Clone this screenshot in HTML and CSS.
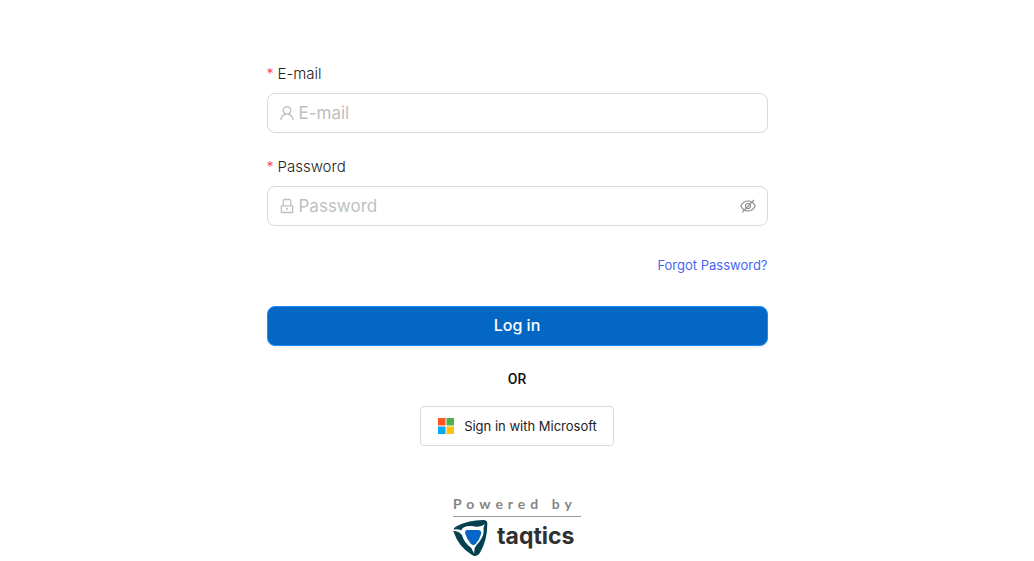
FILE: index.html
```html
<!DOCTYPE html>
<html lang="en">
<head>
<meta charset="utf-8">
<meta name="viewport" content="width=device-width, initial-scale=1">
<title>Log in</title>
<link rel="stylesheet" href="styles.css">
</head>
<body>
<main class="page">
  <form class="login">
    <div class="field">
      <label class="label" for="email"><span class="required">*</span>E-mail</label>
      <div class="control">
        <svg class="prefix" viewBox="64 64 896 896" aria-hidden="true"><path d="M858.5 763.6a374 374 0 00-80.6-119.5 375.63 375.63 0 00-119.5-80.6c-.4-.2-.8-.3-1.2-.5C719.5 518 760 444.7 760 362c0-137-111-248-248-248S264 225 264 362c0 82.7 40.5 156 102.8 201.1-.4.2-.8.3-1.2.5-44.8 18.9-85 46-119.5 80.6a375.63 375.63 0 00-80.6 119.5A371.7 371.7 0 00136 901.8a8 8 0 008 8.2h60c4.4 0 7.9-3.5 8-7.8 2-77.2 33-149.5 87.8-204.3 56.7-56.7 132-87.9 212.2-87.9s155.5 31.2 212.2 87.9C779 752.7 810 825 812 902.2c.1 4.4 3.6 7.8 8 7.8h60a8 8 0 008-8.2c-1-47.8-10.9-94.3-29.5-138.2zM512 534c-45.9 0-89.1-17.9-121.6-50.4S340 407.9 340 362c0-45.9 17.9-89.1 50.4-121.6S466.1 190 512 190s89.1 17.9 121.6 50.4S684 316.1 684 362c0 45.9-17.9 89.1-50.4 121.6S557.9 534 512 534z"/></svg>
        <input class="input" id="email" type="email" placeholder="E-mail">
      </div>
    </div>
    <div class="field">
      <label class="label" for="password"><span class="required">*</span>Password</label>
      <div class="control">
        <svg class="prefix" viewBox="64 64 896 896" aria-hidden="true"><path d="M832 464h-68V240c0-70.7-57.3-128-128-128H388c-70.7 0-128 57.3-128 128v224h-68c-17.7 0-32 14.3-32 32v384c0 17.7 14.3 32 32 32h640c17.7 0 32-14.3 32-32V496c0-17.7-14.3-32-32-32zM332 240c0-30.9 25.1-56 56-56h248c30.9 0 56 25.1 56 56v224H332V240zm460 600H232V536h560v304zM484 701v53c0 4.4 3.6 8 8 8h40c4.4 0 8-3.6 8-8v-53a48.01 48.01 0 10-56 0z"/></svg>
        <input class="input" id="password" type="password" placeholder="Password">
        <button class="reveal" type="button" aria-label="Show password">
          <svg class="eye" viewBox="0 0 16 16" aria-hidden="true">
            <path d="M.8 8C2.500 4.700 4.900 3 8 3s5.500 1.700 7.200 5C13.500 11.300 11.100 13 8 13S2.500 11.300 .8 8z"/>
            <circle cx="8" cy="8" r="2.500"/>
            <path d="M2.300 14.300 14 1.900"/>
          </svg>
        </button>
      </div>
    </div>
    <a class="forgot" href="#forgot">Forgot Password?</a>
    <button class="submit" type="submit">Log in</button>
  </form>
  <p class="or">OR</p>
  <button class="microsoft" type="button">
    <svg class="squares" viewBox="0 0 16 16" aria-hidden="true">
      <path fill="#ff5722" d="M0 0h7.500v7.500H0z"/>
      <path fill="#4caf50" d="M8.500 0H16v7.500H8.500z"/>
      <path fill="#03a9f4" d="M0 8.500h7.500V16H0z"/>
      <path fill="#ffc107" d="M8.500 8.500H16V16H8.500z"/>
    </svg>
    Sign in with Microsoft
  </button>
  <footer class="powered">
    <span class="tagline">Powered by</span>
    <div class="brand">
      <svg class="mark" viewBox="5 4 108 114" aria-hidden="true">
        <path fill="#04404f" d="M13 27Q48 8 96 7Q108 7 108 18Q108 68 86 105Q76 121 61 111Q22 88 7 43Q4 32 13 27z"/>
        <path fill="#fff" d="M4 36Q18 33 30 38Q33 29 46 26Q62 24 75 27Q90 28 101 20Q95 28 97 36Q98 49 91 62Q84 75 75 83Q67 92 69 108Q62 97 60 91Q39 77 32 53Q26 41 4 39z"/>
        <path fill="#0566c8" d="M48 37H81Q92 38 89 50Q84 67 73 79Q66 86 59 79Q47 66 42 49Q39 38 48 37z"/>
      </svg>
      <span class="name">taqtics</span>
    </div>
  </footer>
</main>
</body>
</html>
```
FILE: styles.css
```css
* { box-sizing: border-box; }
body {
  margin: 0;
  background: #fff;
  color: #222;
  font-family: Inter, "Open Sans", sans-serif;
  font-size: 14px;
}
button, input { font: inherit; }
.page {
  display: flex;
  flex-direction: column;
  align-items: center;
  padding-top: 63px;
}
.login {
  display: flex;
  flex-direction: column;
  width: 100%;
  max-width: 501px;
}
.field { margin-bottom: 23px; }
.label {
  display: flex;
  gap: 4px;
  margin-bottom: 8px;
  font-size: 15px;
  font-weight: 300;
  line-height: 22px;
}
.required { color: #ff4d4f; font-size: 14px; font-weight: 400; }
.control {
  display: flex;
  align-items: center;
  gap: 4px;
  height: 40px;
  padding: 0 11px;
  border: 1px solid #d9d9d9;
  border-radius: 8px;
}
.prefix { flex: none; width: 16px; height: 16px; fill: #bfbfbf; }
.input {
  flex: 1;
  min-width: 0;
  padding: 0;
  border: 0;
  outline: 0;
  background: none;
  font-size: 17px;
  line-height: 24px;
}
.input::placeholder { color: #bfbfbf; opacity: 1; }
.reveal { display: flex; padding: 0; border: 0; background: none; cursor: pointer; }
.eye { width: 16px; height: 16px; fill: none; stroke: #8c8c8c; stroke-width: 1.2; }
.forgot {
  align-self: flex-end;
  margin: 5px 0 30px;
  color: #4864f4;
  font-size: 13px;
  line-height: 22px;
  text-decoration: none;
}
.submit {
  height: 40px;
  padding: 0 0 2px;
  border: 1px solid #1890ff;
  border-radius: 8px;
  background: #0567c4;
  box-shadow: 0 2px 0 #f5f5f5;
  color: #fff;
  font-size: 16px;
  font-weight: 500;
  cursor: pointer;
}
.or { margin: 22px 0 16px; color: #111; font-family: Roboto, sans-serif; font-weight: 500; line-height: 22px; }
.microsoft {
  display: flex;
  align-items: center;
  justify-content: center;
  gap: 10px;
  height: 40px;
  padding: 0 16px 0 17px;
  border: 1px solid #d9d9d9;
  border-radius: 4px;
  background: #fff;
  color: #222;
  font-size: 13px;
  cursor: pointer;
}
.squares { width: 16px; height: 16px; }
.powered { width: 128px; margin-top: 48px; }
.tagline {
  display: block;
  padding-bottom: 3px;
  border-bottom: 1px solid #999;
  color: #858585;
  font-family: Lato, sans-serif;
  font-size: 14px;
  font-weight: 700;
  letter-spacing: 5px;
  line-height: 19px;
  white-space: nowrap;
}
.brand { display: flex; align-items: flex-start; gap: 8px; padding-top: 2px; }
.mark { width: 36px; height: 38px; }
.name { color: #303030; font-size: 23px; font-weight: 700; line-height: 34px; }
```
